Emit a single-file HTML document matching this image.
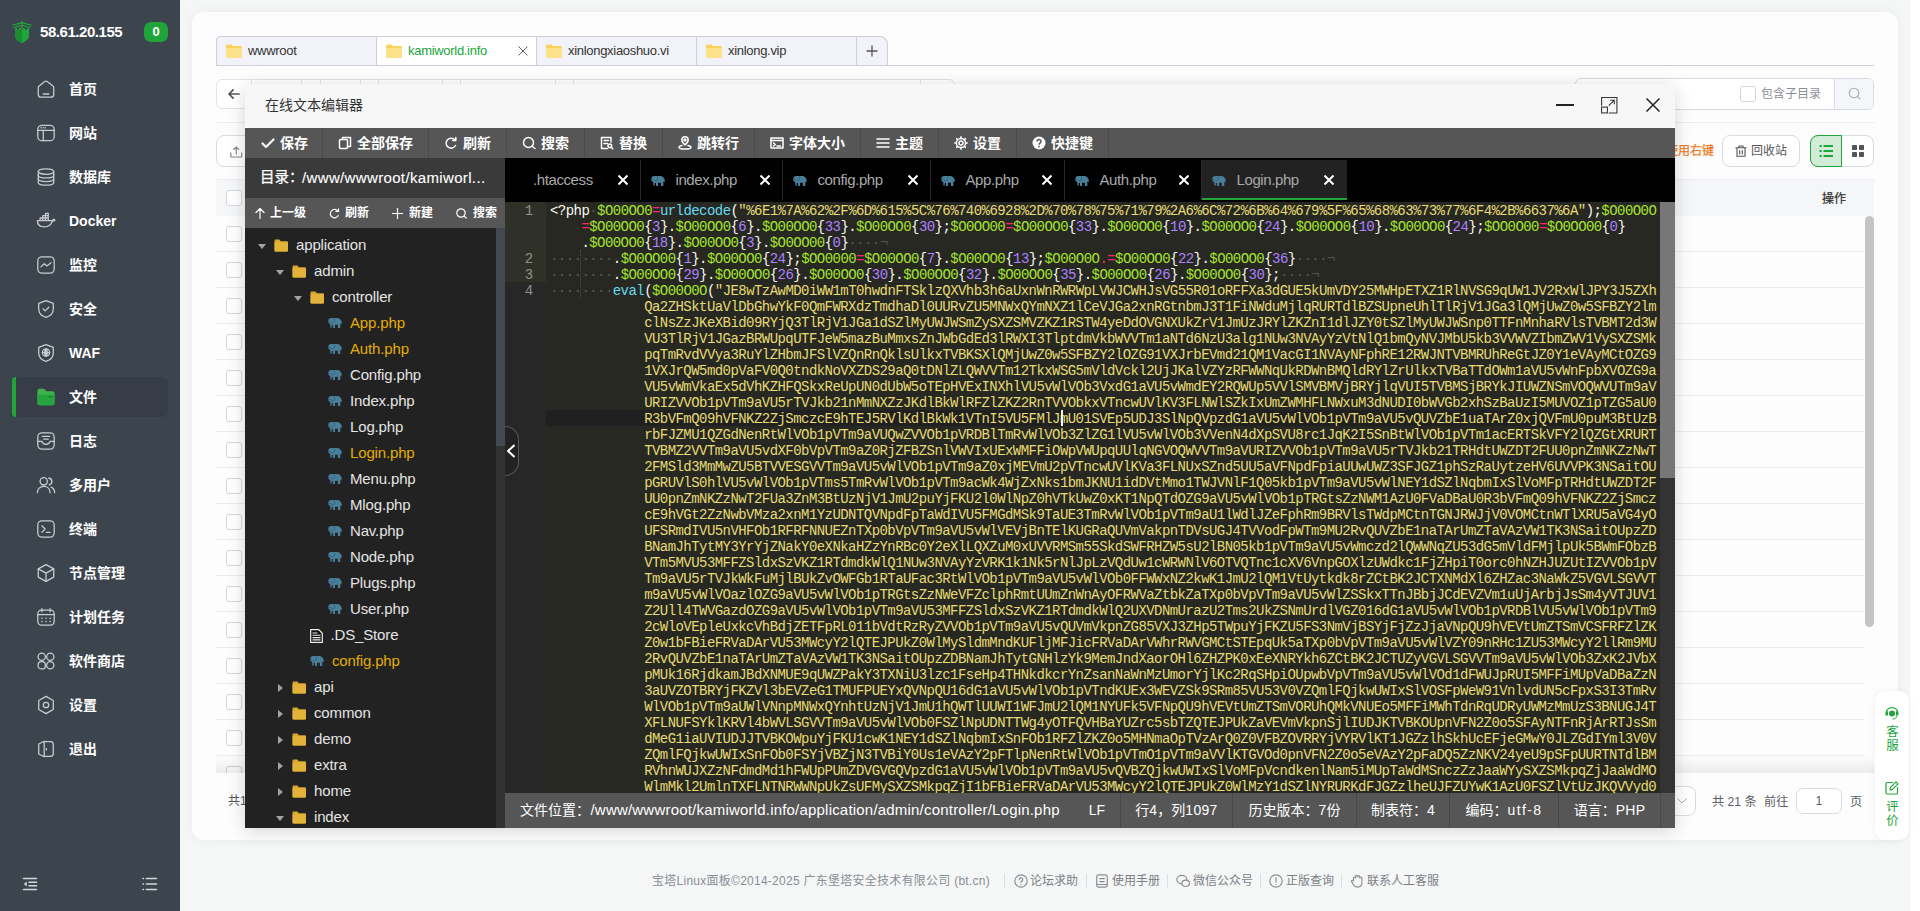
<!DOCTYPE html>
<html lang="zh-CN">
<head>
<meta charset="utf-8">
<title>宝塔Linux面板</title>
<style>
*{box-sizing:border-box;margin:0;padding:0}
html,body{width:1920px;height:911px;overflow:hidden}
body{background:#f5f7f7;font-family:"Liberation Sans","Noto Sans CJK SC",sans-serif;font-size:12px;color:#333;position:relative}
.abs{position:absolute}
svg{display:block}
/* ---------- sidebar ---------- */
#side{position:absolute;left:0;top:0;width:180px;height:911px;background:#3c444e;color:#fff}
#side .ip{position:absolute;left:40px;top:22px;font-size:15px;font-weight:bold;line-height:20px;letter-spacing:-0.45px}
#side .badge{position:absolute;left:144px;top:22px;width:24px;height:20px;border-radius:7px;background:#20a53a;font-size:13px;font-weight:bold;line-height:20px;text-align:center}
#side .logo{position:absolute;left:12px;top:20px}
.mi{position:absolute;left:12px;width:156px;height:44px;border-radius:6px}
.mi .ic{position:absolute;left:23.500px;top:12px;width:20px;height:20px}
.mi .ic svg{width:20px;height:20px}
.mi .tx{position:absolute;left:57px;top:0;line-height:44px;font-size:14px;font-weight:bold;white-space:nowrap}
.mi.on{background:#363d47;height:40px}
.mi.on .ic{top:10px}
.mi.on .tx{line-height:40px}
.mi.on:before{content:"";position:absolute;left:0;top:0;width:4px;height:40px;background:#20a53a;border-radius:6px 0 0 6px}
/* ---------- main card ---------- */
#card{position:absolute;left:192px;top:12px;width:1706px;height:828px;background:#fdfdfd;border-radius:12px;box-shadow:0 0 12px rgba(0,0,0,.05)}
#pgscroll{position:absolute;left:1910px;top:0;width:10px;height:911px;background:#fff}
</style>
</head>
<body>
<div id="side">
<div class="logo"><svg width="20" height="24" viewBox="0 0 20 24"><path d="M10 0.300 l0.800 1.900 l9 2.600 l-0.300 0.900 l-9.500 -2.300 l-9.500 2.300 l-0.300 -0.900 l9 -2.600 Z" fill="#20a53a"/><path d="M1 7 l9 -2.200 l9 2.200 l-0.300 0.900 l-8.700 -2 l-8.700 2 Z" fill="#20a53a"/><rect x="9.400" y="2" width="1.200" height="7" fill="#20a53a"/><path d="M3 8 h2 v1.500 h2 v-1.500 h2 v1.500 h2 v-1.500 h2 v1.500 h2 v-1.500 h2 v8 c0 3 -3.500 5.500 -7 7 c-3.500 -1.500 -7 -4 -7 -7 Z" fill="#20a53a"/><path d="M10 9.500 v13.500 c-3.500 -1.500 -7 -4 -7 -7 v-6.500 Z" fill="#1c8c31"/></svg></div>
<div class="ip">58.61.20.155</div><div class="badge">0</div>
<div class="mi" style="top:67px"><div class="ic"><svg width="22" height="22" viewBox="0 0 22 22" fill="none" stroke="#c9cccf" stroke-width="1.4" stroke-linecap="round" stroke-linejoin="round"><path d="M2.500 9.300 c0 -0.700 0.300 -1.300 0.900 -1.700 l6.200 -4.800 c0.800 -0.600 2 -0.600 2.800 0 l6.200 4.800 c0.600 0.400 0.900 1 0.900 1.700 V17 a3 3 0 0 1 -3 3 H5.500 a3 3 0 0 1 -3 -3 Z"/><path d="M8 16.5 h6"/></svg></div><div class="tx">首页</div></div>
<div class="mi" style="top:111px"><div class="ic"><svg width="22" height="22" viewBox="0 0 22 22" fill="none" stroke="#c9cccf" stroke-width="1.4" stroke-linecap="round" stroke-linejoin="round"><rect x="2" y="2.5" width="18" height="17" rx="4.5"/><path d="M2 8 h18 M8 8 v11.5"/><path d="M5.5 5.3 h0.1 M7.8 5.3 h0.1 M10.1 5.3 h0.1" stroke-width="1.6"/></svg></div><div class="tx">网站</div></div>
<div class="mi" style="top:155px"><div class="ic"><svg width="22" height="22" viewBox="0 0 22 22" fill="none" stroke="#c9cccf" stroke-width="1.4" stroke-linecap="round" stroke-linejoin="round"><ellipse cx="11" cy="5" rx="8.5" ry="3"/><path d="M2.5 5 v12 c0 1.7 3.8 3 8.5 3 s8.5 -1.3 8.5 -3 v-12"/><path d="M2.5 9 c0 1.7 3.8 3 8.5 3 s8.5 -1.3 8.5 -3 M2.5 13 c0 1.7 3.8 3 8.5 3 s8.5 -1.3 8.5 -3"/></svg></div><div class="tx">数据库</div></div>
<div class="mi" style="top:199px"><div class="ic"><svg width="22" height="22" viewBox="0 0 22 22" fill="none" stroke="#c9cccf" stroke-width="1.4" stroke-linecap="round" stroke-linejoin="round"><path d="M1.5 10.5 h15.5 c1 0 2 -0.6 2.3 -1.6 c0.8 0.2 1.5 0.9 1.5 1.6 c-0.8 0.6 -1.8 0.8 -2.8 0.7 c-1.2 3.8 -4.3 6.3 -9 6.3 c-4.5 0 -7.5 -2.6 -7.5 -7 Z"/><path d="M4.5 10.3 v-2.6 h9 v2.6 M7.5 7.7 v-2.6 h6 v2.6 M10.5 5.1 v-2.4 h3 v2.4 M7.5 7.7 v2.6 M10.5 5.1 v5.2"/></svg></div><div class="tx">Docker</div></div>
<div class="mi" style="top:243px"><div class="ic"><svg width="22" height="22" viewBox="0 0 22 22" fill="none" stroke="#c9cccf" stroke-width="1.4" stroke-linecap="round" stroke-linejoin="round"><rect x="2" y="2" width="18" height="18" rx="4.5"/><path d="M5.5 13 l3.5 -3.5 l3 2.5 l4.5 -3.5"/></svg></div><div class="tx">监控</div></div>
<div class="mi" style="top:287px"><div class="ic"><svg width="22" height="22" viewBox="0 0 22 22" fill="none" stroke="#c9cccf" stroke-width="1.4" stroke-linecap="round" stroke-linejoin="round"><path d="M11 1.8 l8 3 v6.2 c0 4.5 -3.2 7.8 -8 9.3 c-4.8 -1.5 -8 -4.8 -8 -9.3 v-6.2 Z"/><path d="M7.8 10.8 l2.3 2.3 l4 -4"/></svg></div><div class="tx">安全</div></div>
<div class="mi" style="top:331px"><div class="ic"><svg width="22" height="22" viewBox="0 0 22 22" fill="none" stroke="#c9cccf" stroke-width="1.4" stroke-linecap="round" stroke-linejoin="round"><path d="M11 1.8 l8 3 v6.2 c0 4.5 -3.2 7.8 -8 9.3 c-4.8 -1.5 -8 -4.8 -8 -9.3 v-6.2 Z"/><circle cx="11" cy="10.5" r="4"/><path d="M7 10.5 h8 M11 6.5 v8 M11 6.5 c-2 1.5 -2 6.5 0 8 M11 6.5 c2 1.5 2 6.5 0 8"/></svg></div><div class="tx">WAF</div></div>
<div class="mi on" style="top:377px"><div class="ic"><svg width="22" height="22" viewBox="0 0 22 22"><path d="M1.5 4.5 a2.5 2.5 0 0 1 2.5 -2.5 h3.8 c0.9 0 1.7 0.4 2.2 1.1 l1.2 1.6 h6.8 a2.5 2.5 0 0 1 2.5 2.5 v10.3 a2.5 2.5 0 0 1 -2.5 2.5 h-14 a2.5 2.5 0 0 1 -2.5 -2.5 Z" fill="#3bb14f"/><path d="M1.5 8.5 h19 v9 a2.5 2.5 0 0 1 -2.5 2.5 h-14 a2.5 2.5 0 0 1 -2.5 -2.5 Z" fill="#27a43d"/><rect x="13.5" y="10" width="4.5" height="1.6" rx="0.8" fill="#1d7f2e"/></svg></div><div class="tx">文件</div></div>
<div class="mi" style="top:419px"><div class="ic"><svg width="22" height="22" viewBox="0 0 22 22" fill="none" stroke="#c9cccf" stroke-width="1.4" stroke-linecap="round" stroke-linejoin="round"><rect x="2" y="2" width="18" height="18" rx="4.5"/><path d="M2 11.5 h4.5 c0.5 2 2.2 3.2 4.5 3.2 s4 -1.2 4.5 -3.2 h4.500"/><path d="M7 6 h8 M8.5 9 h5"/></svg></div><div class="tx">日志</div></div>
<div class="mi" style="top:463px"><div class="ic"><svg width="22" height="22" viewBox="0 0 22 22" fill="none" stroke="#c9cccf" stroke-width="1.4" stroke-linecap="round" stroke-linejoin="round"><circle cx="8.5" cy="7" r="4"/><path d="M1.5 19.5 c0 -4.2 3 -7 7 -7 s7 2.800 7 7"/><path d="M14 3.300 c2 0.300 3.500 1.800 3.500 3.800 s-1.300 3.300 -3 3.700 M16.500 13.300 c2.500 1 4 3.200 4 6.200"/></svg></div><div class="tx">多用户</div></div>
<div class="mi" style="top:507px"><div class="ic"><svg width="22" height="22" viewBox="0 0 22 22" fill="none" stroke="#c9cccf" stroke-width="1.4" stroke-linecap="round" stroke-linejoin="round"><rect x="2" y="2" width="18" height="18" rx="4.500"/><path d="M6.500 7.500 l3.500 3.500 l-3.500 3.500 M11.500 14.800 h4"/></svg></div><div class="tx">终端</div></div>
<div class="mi" style="top:551px"><div class="ic"><svg width="22" height="22" viewBox="0 0 22 22" fill="none" stroke="#c9cccf" stroke-width="1.4" stroke-linecap="round" stroke-linejoin="round"><path d="M11 1.800 l8.500 4.700 v9 l-8.500 4.700 l-8.500 -4.700 v-9 Z"/><path d="M2.500 6.500 l8.500 4.700 l8.500 -4.700 M11 11.200 v9"/></svg></div><div class="tx">节点管理</div></div>
<div class="mi" style="top:595px"><div class="ic"><svg width="22" height="22" viewBox="0 0 22 22" fill="none" stroke="#c9cccf" stroke-width="1.4" stroke-linecap="round" stroke-linejoin="round"><rect x="2" y="3.500" width="18" height="16.500" rx="4"/><path d="M2 8.500 h18 M6.500 1.800 v3.500 M15.500 1.800 v3.500"/><path d="M6.500 12.300 h0.100 M11 12.300 h0.100 M15.500 12.300 h0.100 M6.500 16 h0.100 M11 16 h0.100 M15.500 16 h0.100" stroke-width="1.700"/></svg></div><div class="tx">计划任务</div></div>
<div class="mi" style="top:639px"><div class="ic"><svg width="22" height="22" viewBox="0 0 22 22" fill="none" stroke="#c9cccf" stroke-width="1.4" stroke-linecap="round" stroke-linejoin="round"><circle cx="6.300" cy="6.300" r="4"/><circle cx="15.700" cy="6.300" r="4"/><rect x="2.300" y="11.700" width="8" height="8" rx="3.600"/><circle cx="15.700" cy="15.700" r="4"/></svg></div><div class="tx">软件商店</div></div>
<div class="mi" style="top:683px"><div class="ic"><svg width="22" height="22" viewBox="0 0 22 22" fill="none" stroke="#c9cccf" stroke-width="1.4" stroke-linecap="round" stroke-linejoin="round"><path d="M11 1.500 l8 4.600 v9.800 l-8 4.600 l-8 -4.600 v-9.800 Z"/><circle cx="11" cy="11" r="3"/></svg></div><div class="tx">设置</div></div>
<div class="mi" style="top:727px"><div class="ic"><svg width="22" height="22" viewBox="0 0 22 22" fill="none" stroke="#c9cccf" stroke-width="1.4" stroke-linecap="round" stroke-linejoin="round"><path d="M9 3 h7 a3 3 0 0 1 3 3 v10 a3 3 0 0 1 -3 3 h-7"/><path d="M3 5.500 l6 -3 v17 l-6 -3 Z" /><path d="M11.500 10.500 v1.500"/></svg></div><div class="tx">退出</div></div>
<div class="abs" style="left:22px;top:876px"><svg width="16" height="16" viewBox="0 0 16 16" fill="none" stroke="#d5d7da" stroke-width="1.600" stroke-linecap="round"><path d="M1.500 2.500 h13 M7 6.200 h7.500 M7 9.800 h7.500 M1.500 13.500 h13"/><path d="M4.800 5.500 l-3 2.500 l3 2.500 Z" fill="#d5d7da" stroke="none"/></svg></div>
<div class="abs" style="left:142px;top:876px"><svg width="16" height="16" viewBox="0 0 16 16" fill="none" stroke="#d5d7da" stroke-width="1.600" stroke-linecap="round"><path d="M4.500 2.500 h10 M4.500 8 h10 M4.500 13.500 h10 M1 2.500 h0.500 M1 8 h0.500 M1 13.500 h0.500"/></svg></div>
</div>
<style>
/* ---------- file manager ---------- */
.ftab{position:absolute;top:36px;height:30px;width:160px;background:#f2f3f8;border:1px solid #cdd0da;border-left:none;font-size:13px;line-height:28px;color:#333;white-space:nowrap}
.ftab .fi{position:absolute;left:9px;top:7px}
.ftab .t{position:absolute;left:31px;top:0;letter-spacing:-0.3px}
.ftab.on{background:#fff;border-bottom-color:#fff;color:#20a53a}
.hline{position:absolute;height:1px;background:#ebecf1}
.cb{position:absolute;width:16px;height:16px;border:1px solid #d3d6e0;border-radius:3px;background:#fff}
.btn{position:absolute;border:1px solid #d8dbe4;border-radius:8px;background:#fff}
</style>

<div id="card"></div>
<div id="pgscroll"></div>
<div class="ftab" style="left:216px;width:161px;border-left:1px solid #cdd0da;border-radius:4px 0 0 0;"><div class="fi"><svg width="16" height="14" viewBox="0 0 16 14"><path d="M0 2 a1.500 1.500 0 0 1 1.500 -1.500 h4 l1.500 1.500 h7.500 a1.500 1.500 0 0 1 1.500 1.500 v9 a1.500 1.500 0 0 1 -1.500 1.500 h-13 a1.500 1.500 0 0 1 -1.500 -1.500 Z" fill="#f9d35c"/><path d="M0 4 h16 v8.500 a1.500 1.500 0 0 1 -1.500 1.500 h-13 a1.500 1.500 0 0 1 -1.500 -1.500 Z" fill="#fde28a"/></svg></div><div class="t">wwwroot</div></div>
<div class="ftab on" style="left:377px;"><div class="fi"><svg width="16" height="14" viewBox="0 0 16 14"><path d="M0 2 a1.500 1.500 0 0 1 1.500 -1.500 h4 l1.500 1.500 h7.500 a1.500 1.500 0 0 1 1.500 1.500 v9 a1.500 1.500 0 0 1 -1.500 1.500 h-13 a1.500 1.500 0 0 1 -1.500 -1.500 Z" fill="#f9d35c"/><path d="M0 4 h16 v8.500 a1.500 1.500 0 0 1 -1.500 1.500 h-13 a1.500 1.500 0 0 1 -1.500 -1.500 Z" fill="#fde28a"/></svg></div><div class="t">kamiworld.info</div><svg class="abs" style="left:141px;top:9px" width="10" height="10" viewBox="0 0 10 10" stroke="#666" stroke-width="1" fill="none"><path d="M0.500 0.500 l9 9 M9.500 0.500 l-9 9"/></svg></div>
<div class="ftab" style="left:537px;"><div class="fi"><svg width="16" height="14" viewBox="0 0 16 14"><path d="M0 2 a1.500 1.500 0 0 1 1.500 -1.500 h4 l1.500 1.500 h7.500 a1.500 1.500 0 0 1 1.500 1.500 v9 a1.500 1.500 0 0 1 -1.500 1.500 h-13 a1.500 1.500 0 0 1 -1.500 -1.500 Z" fill="#f9d35c"/><path d="M0 4 h16 v8.500 a1.500 1.500 0 0 1 -1.500 1.500 h-13 a1.500 1.500 0 0 1 -1.500 -1.500 Z" fill="#fde28a"/></svg></div><div class="t">xinlongxiaoshuo.vi</div></div>
<div class="ftab" style="left:697px;"><div class="fi"><svg width="16" height="14" viewBox="0 0 16 14"><path d="M0 2 a1.500 1.500 0 0 1 1.500 -1.500 h4 l1.500 1.500 h7.500 a1.500 1.500 0 0 1 1.500 1.500 v9 a1.500 1.500 0 0 1 -1.500 1.500 h-13 a1.500 1.500 0 0 1 -1.500 -1.500 Z" fill="#f9d35c"/><path d="M0 4 h16 v8.500 a1.500 1.500 0 0 1 -1.500 1.500 h-13 a1.500 1.500 0 0 1 -1.500 -1.500 Z" fill="#fde28a"/></svg></div><div class="t">xinlong.vip</div></div>
<div class="ftab" style="left:857px;width:31px;border-radius:0 8px 0 0"><svg class="abs" style="left:9px;top:8px" width="12" height="12" viewBox="0 0 12 12" stroke="#555" stroke-width="1.300" fill="none"><path d="M6 0.500 v11 M0.500 6 h11"/></svg></div>
<div class="hline" style="left:216px;top:65px;width:1658px;background:#cdd0da"></div>
<div class="btn" style="left:216px;top:79px;width:739px;height:30px;border-radius:6px;border-color:#e2e4ea"></div>
<div class="abs" style="left:251px;top:79px;width:1px;height:7px;background:#e2e4ea"></div>
<div class="abs" style="left:301px;top:79px;width:1px;height:7px;background:#e2e4ea"></div>
<div class="abs" style="left:320px;top:79px;width:1px;height:7px;background:#e2e4ea"></div>
<div class="abs" style="left:360px;top:79px;width:1px;height:7px;background:#e2e4ea"></div>
<div class="abs" style="left:378px;top:79px;width:1px;height:7px;background:#e2e4ea"></div>
<div class="abs" style="left:442px;top:79px;width:1px;height:7px;background:#e2e4ea"></div>
<div class="abs" style="left:460px;top:79px;width:1px;height:7px;background:#e2e4ea"></div>
<div class="abs" style="left:555px;top:79px;width:1px;height:7px;background:#e2e4ea"></div>
<div class="abs" style="left:573px;top:79px;width:1px;height:7px;background:#e2e4ea"></div>
<div class="abs" style="left:920px;top:79px;width:1px;height:7px;background:#e2e4ea"></div>
<svg class="abs" style="left:228px;top:89px" width="12" height="10" viewBox="0 0 13 11" stroke="#555" stroke-width="1.900" fill="none" stroke-linecap="round" stroke-linejoin="round"><path d="M12 5.500 h-11 M5.500 1 l-4.500 4.500 l4.500 4.500"/></svg>
<div class="btn" style="left:1575px;top:78px;width:299px;height:32px;border-radius:6px"></div>
<div class="abs" style="left:1834px;top:79px;width:39px;height:30px;background:#f5f6f9;border-left:1px solid #d8dbe4;border-radius:0 6px 6px 0"></div>
<svg class="abs" style="left:1848px;top:87px" width="13" height="13" viewBox="0 0 13 13" stroke="#aaa" stroke-width="1.100" fill="none" stroke-linecap="round"><circle cx="6" cy="6" r="4.800"/><path d="M9.600 9.600 l2.200 2.200"/></svg>
<div class="cb" style="left:1740px;top:86px"></div>
<div class="abs" style="left:1761px;top:84px;line-height:20px;font-size:12px;color:#8c8f96;white-space:nowrap">包含子目录</div>
<div class="hline" style="left:216px;top:122px;width:1658px"></div>
<div class="btn" style="left:216px;top:135px;width:60px;height:32px"></div>
<svg class="abs" style="left:230px;top:146px" width="12.500" height="12" viewBox="0 0 15 14" stroke="#8a8a8a" stroke-width="1.400" fill="none" stroke-linecap="round" stroke-linejoin="round"><path d="M1 8 v5 h13 v-5 M7.500 9.500 v-8.500 M4.500 4 l3 -3 l3 3"/></svg>
<div class="abs" style="left:1594px;top:141px;width:120px;text-align:right;line-height:20px;font-size:12px;color:#ef7a22;-webkit-text-stroke:0.250px #ef7a22;white-space:nowrap">提示：使用右键</div>
<div class="btn" style="left:1722px;top:135px;width:78px;height:32px"></div>
<svg class="abs" style="left:1735px;top:145px" width="12" height="12" viewBox="0 0 12 12" stroke="#555" stroke-width="1.100" fill="none" stroke-linecap="round"><path d="M0.800 2.800 h10.400 M4 2.800 v-1.800 h4 v1.800 M2 2.800 v8.400 h8 v-8.400 M4.700 5.500 v3.500 M7.300 5.500 v3.500"/></svg>
<div class="abs" style="left:1751px;top:141px;line-height:20px;font-size:12px;color:#555;white-space:nowrap">回收站</div>
<div class="btn" style="left:1810px;top:135px;width:64px;height:32px"></div>
<div class="abs" style="left:1810px;top:135px;width:32px;height:32px;background:#d2edd7;border:1px solid #20a53a;border-radius:8px 0 0 8px"></div>
<svg class="abs" style="left:1819px;top:144px" width="14" height="14" viewBox="0 0 14 14" stroke="#20a53a" stroke-width="1.800" fill="none"><path d="M4.500 2 h9.500 M4.500 7 h9.500 M4.500 12 h9.500 M0.500 2 h2.200 M0.500 7 h2.200 M0.500 12 h2.200"/></svg>
<svg class="abs" style="left:1852px;top:145px" width="12" height="12" viewBox="0 0 12 12" fill="#555"><rect x="0" y="0" width="5" height="5" rx="0.800"/><rect x="7" y="0" width="5" height="5" rx="0.800"/><rect x="0" y="7" width="5" height="5" rx="0.800"/><rect x="7" y="7" width="5" height="5" rx="0.800"/></svg>
<div class="hline" style="left:216px;top:179px;width:1658px"></div>
<div class="abs" style="left:216px;top:180px;width:1658px;height:36px;background:#f5f6f7"></div>
<div class="cb" style="left:226px;top:190px"></div>
<div class="abs" style="left:1822px;top:189px;line-height:20px;font-size:12px;color:#333;-webkit-text-stroke:0.250px #333;white-space:nowrap">操作</div>
<div class="abs" style="left:216px;top:216px;width:1658px;height:557px;overflow:hidden">
<div class="cb" style="left:10px;top:10px"></div><div class="hline" style="left:0;top:35px;width:1648px"></div>
<div class="cb" style="left:10px;top:46px"></div><div class="hline" style="left:0;top:71px;width:1648px"></div>
<div class="cb" style="left:10px;top:82px"></div><div class="hline" style="left:0;top:107px;width:1648px"></div>
<div class="cb" style="left:10px;top:118px"></div><div class="hline" style="left:0;top:143px;width:1648px"></div>
<div class="cb" style="left:10px;top:154px"></div><div class="hline" style="left:0;top:179px;width:1648px"></div>
<div class="cb" style="left:10px;top:190px"></div><div class="hline" style="left:0;top:215px;width:1648px"></div>
<div class="cb" style="left:10px;top:226px"></div><div class="hline" style="left:0;top:251px;width:1648px"></div>
<div class="cb" style="left:10px;top:262px"></div><div class="hline" style="left:0;top:287px;width:1648px"></div>
<div class="cb" style="left:10px;top:298px"></div><div class="hline" style="left:0;top:323px;width:1648px"></div>
<div class="cb" style="left:10px;top:334px"></div><div class="hline" style="left:0;top:359px;width:1648px"></div>
<div class="cb" style="left:10px;top:370px"></div><div class="hline" style="left:0;top:395px;width:1648px"></div>
<div class="cb" style="left:10px;top:406px"></div><div class="hline" style="left:0;top:431px;width:1648px"></div>
<div class="cb" style="left:10px;top:442px"></div><div class="hline" style="left:0;top:467px;width:1648px"></div>
<div class="cb" style="left:10px;top:478px"></div><div class="hline" style="left:0;top:503px;width:1648px"></div>
<div class="cb" style="left:10px;top:514px"></div><div class="hline" style="left:0;top:539px;width:1648px"></div>
<div class="cb" style="left:10px;top:550px"></div><div class="hline" style="left:0;top:575px;width:1648px"></div>
<div class="abs" style="left:0;top:540px;width:1658px;height:17px;background:linear-gradient(rgba(0,0,0,0),rgba(0,0,0,.07))"></div>
</div>
<div class="abs" style="left:1865px;top:216px;width:9px;height:411px;border-radius:5px;background:#c4c4c4"></div>
<div class="abs" style="left:228px;top:791px;line-height:20px;font-size:12px;color:#555;white-space:nowrap">共16个目录，5个文件，文件大小：</div>
<div class="btn" style="left:1600px;top:786px;width:96px;height:30px;border-radius:8px"></div>
<svg class="abs" style="left:1677px;top:798px" width="10" height="6" viewBox="0 0 10 6" stroke="#aaa" stroke-width="1" fill="none"><path d="M0.500 0.500 l4.500 4.500 l4.500 -4.500"/></svg>
<div class="abs" style="left:1712px;top:792px;line-height:20px;font-size:12.200px;color:#5a5e66;white-space:nowrap">共 21 条</div>
<div class="abs" style="left:1764px;top:792px;line-height:20px;font-size:12.200px;color:#5a5e66;white-space:nowrap">前往</div>
<div class="btn" style="left:1796px;top:788px;width:46px;height:26px;border-radius:7px;text-align:center;line-height:25px;font-size:12.200px;color:#5a5e66">1</div>
<div class="abs" style="left:1850px;top:792px;line-height:20px;font-size:12.200px;color:#5a5e66;white-space:nowrap">页</div>
<div class="abs" style="left:1875px;top:691px;width:34px;height:149px;background:#fff;border-radius:10px;box-shadow:0 0 6px rgba(0,0,0,.06)"></div>
<svg class="abs" style="left:1885px;top:707px" width="14" height="13" viewBox="0 0 14 13"><path d="M7 0 a6.500 6 0 0 1 6.500 6 v2.500 h-2.500 v-4 h0.800 a5 4.500 0 0 0 -9.600 0 h0.800 v4 h-2.500 v-2.500 a6.500 6 0 0 1 6.500 -6 Z" fill="#20a53a"/><circle cx="7" cy="6.500" r="3" fill="#20a53a"/><path d="M11.500 9 c0 2 -1.500 3 -4 3" stroke="#20a53a" stroke-width="1" fill="none"/></svg>
<div class="abs" style="left:1886px;top:725px;width:13px;line-height:14px;font-size:12.500px;color:#20a53a;text-align:center">客服</div>
<svg class="abs" style="left:1885px;top:781px" width="14" height="14" viewBox="0 0 14 14" stroke="#20a53a" stroke-width="1.200" fill="none" stroke-linecap="round" stroke-linejoin="round"><path d="M7.500 1.500 h-5 a1.500 1.500 0 0 0 -1.500 1.500 v8.500 a1.500 1.500 0 0 0 1.500 1.500 h8.500 a1.500 1.500 0 0 0 1.500 -1.500 v-5"/><path d="M11 0.800 l2 2 l-5.500 5.500 l-2.500 0.500 l0.500 -2.500 Z"/></svg>
<div class="abs" style="left:1886px;top:800px;width:13px;line-height:14px;font-size:12.500px;color:#20a53a;text-align:center">评价</div>
<div class="abs" style="left:652px;top:871px;line-height:20px;font-size:12px;color:#8a8d94;white-space:nowrap;letter-spacing:0.260px">宝塔Linux面板©2014-2025 广东堡塔安全技术有限公司 (bt.cn)</div>
<div class="abs" style="left:1004px;top:874px;width:1px;height:14px;background:#dcdfe6"></div>
<svg class="abs" style="left:1014px;top:874px" width="14" height="14" viewBox="0 0 12 12" stroke="#8a8d94" stroke-width="1" fill="none" stroke-linecap="round" stroke-linejoin="round"><circle cx="6" cy="6" r="5.300"/><path d="M4.500 4.800 a1.500 1.500 0 1 1 2.200 1.300 c-0.500 0.300 -0.700 0.600 -0.700 1.200 M6 9 v0.200"/></svg>
<div class="abs" style="left:1030px;top:871px;line-height:20px;font-size:12px;color:#7b7e85;white-space:nowrap">论坛求助</div>
<div class="abs" style="left:1086px;top:874px;width:1px;height:14px;background:#dcdfe6"></div>
<svg class="abs" style="left:1095px;top:874px" width="14" height="14" viewBox="0 0 12 12" stroke="#8a8d94" stroke-width="1" fill="none" stroke-linecap="round" stroke-linejoin="round"><rect x="1.500" y="0.800" width="9" height="10.400" rx="1.500"/><path d="M4 4 h4 M4 6.500 h4 M1.500 9 h9"/></svg>
<div class="abs" style="left:1112px;top:871px;line-height:20px;font-size:12px;color:#7b7e85;white-space:nowrap">使用手册</div>
<div class="abs" style="left:1167px;top:874px;width:1px;height:14px;background:#dcdfe6"></div>
<svg class="abs" style="left:1176px;top:874px" width="14" height="14" viewBox="0 0 12 12" stroke="#8a8d94" stroke-width="1" fill="none" stroke-linecap="round" stroke-linejoin="round"><ellipse cx="5" cy="4.800" rx="4.300" ry="3.600"/><ellipse cx="8.300" cy="8" rx="3.200" ry="2.700" fill="#f5f7f7"/></svg>
<div class="abs" style="left:1193px;top:871px;line-height:20px;font-size:12px;color:#7b7e85;white-space:nowrap">微信公众号</div>
<div class="abs" style="left:1260px;top:874px;width:1px;height:14px;background:#dcdfe6"></div>
<svg class="abs" style="left:1269px;top:874px" width="14" height="14" viewBox="0 0 12 12" stroke="#8a8d94" stroke-width="1" fill="none" stroke-linecap="round" stroke-linejoin="round"><circle cx="6" cy="6" r="5.300"/><path d="M6 3 v3.800 M6 8.800 v0.200"/></svg>
<div class="abs" style="left:1286px;top:871px;line-height:20px;font-size:12px;color:#7b7e85;white-space:nowrap">正版查询</div>
<div class="abs" style="left:1341px;top:874px;width:1px;height:14px;background:#dcdfe6"></div>
<svg class="abs" style="left:1350px;top:874px" width="14" height="14" viewBox="0 0 12 12" stroke="#8a8d94" stroke-width="1" fill="none" stroke-linecap="round" stroke-linejoin="round"><path d="M3 6 v-2.500 a0.900 0.900 0 0 1 1.800 0 v-1.500 a0.900 0.900 0 0 1 1.800 0 v0.500 a0.900 0.900 0 0 1 1.800 0 v1 a0.900 0.900 0 0 1 1.800 0 v4 c0 2.200 -1.500 3.700 -3.800 3.700 c-1.800 0 -2.800 -0.800 -3.600 -2.200 l-1.500 -2.600 c-0.400 -0.800 0.700 -1.400 1.300 -0.700 Z"/></svg>
<div class="abs" style="left:1367px;top:871px;line-height:20px;font-size:12px;color:#7b7e85;white-space:nowrap">联系人工客服</div>
<style>
/* ---------- editor modal ---------- */
#modal{position:absolute;left:245px;top:84px;width:1430px;height:744px;background:transparent;border-radius:8px 8px 0 0;box-shadow:0 3px 18px rgba(0,0,0,.16)}
#mhead{position:absolute;left:0;top:0;width:1430px;height:44px;background:#f7f7f7;border-radius:8px}
#mhead .t{position:absolute;left:20px;top:0;line-height:43px;font-size:14px;color:#333}
#tbar{position:absolute;left:0;top:44px;width:1430px;height:30px;background:#565656}
#tbar .b{position:absolute;top:0;height:30px;border-right:1px solid #4a4a4a;color:#fff;font-size:14px;font-weight:bold;line-height:30px;white-space:nowrap}
#tbar .b svg{position:absolute;top:8px}
#tbar .b span{position:absolute;top:0}
#dir{position:absolute;left:0;top:74px;width:260px;height:40px;background:#3a3a3a;color:#fff;font-size:15px;line-height:39px;white-space:nowrap}
#tt{position:absolute;left:0;top:114px;width:260px;height:30px;background:#565656;color:#fff;font-size:12px;font-weight:bold;line-height:30px;white-space:nowrap}
#tt span{position:absolute;top:0}
#tt svg{position:absolute;top:10px}
#tree{position:absolute;left:0;top:144px;width:260px;height:600px;background:#222;overflow:hidden}
.tr{position:absolute;left:0;height:26px;line-height:26px;font-size:15px;color:#e4e4e4;white-space:nowrap;letter-spacing:-0.150px}
.tr.y{color:#e2ae04}
.tr svg{position:absolute}
.tr span{position:absolute;top:0}
#etabs{position:absolute;left:260px;top:74px;width:1170px;height:44px;background:#000}
.et{position:absolute;top:2px;height:40px;border-right:1px solid #2a2a2a;color:#a9a9a9;font-size:15px;line-height:40px;white-space:nowrap;letter-spacing:-0.400px}
.et.on{background:#222;border-bottom:2px solid #20a53a;border-right:none}
.et span{position:absolute;top:0}
.et svg{position:absolute}
#gut{position:absolute;left:260px;top:118px;width:41px;height:592px;background:#2f3129}
#code{position:absolute;left:301px;top:118px;width:1114px;height:592px;background:#272822;overflow:hidden}
.ln{position:absolute;right:13.500px;height:16px;line-height:16px;font-family:"Liberation Mono",monospace;font-size:14px;letter-spacing:-0.556px;color:#8f908a}
.cl{position:absolute;height:16px;line-height:16px;font-family:"Liberation Mono",monospace;font-size:14px;letter-spacing:-0.556px;white-space:pre;color:#f8f8f2}
.v{color:#a6e22e}.k{color:#f92672}.f{color:#66d9ef}.s{color:#e6db74}.n{color:#ae81ff}.i{color:#55564f}
#vsb{position:absolute;left:1415px;top:118px;width:15px;height:592px;background:#333}
#sbar{position:absolute;left:260px;top:709px;width:1170px;height:35px;background:#565656;color:#fff;font-size:14px;line-height:34px;white-space:nowrap}
#sbar .g{position:absolute;top:0;height:35px;border-left:1px solid #474747;text-align:center}
</style>

<div id="modal">
<div id="mhead"><div class="t">在线文本编辑器</div>
<svg class="abs" style="left:1311px;top:20px" width="18" height="3" viewBox="0 0 18 3"><rect width="18" height="2" y="0" fill="#222"/></svg>
<svg class="abs" style="left:1356px;top:13px" width="16.500" height="16.500" viewBox="0 0 17 17" stroke="#333" stroke-width="1.100" fill="none"><path d="M0.600 9 v-8.400 h15.800 v15.800 h-8.400"/><rect x="0.600" y="10.400" width="6" height="6"/><path d="M8 9 l5.500 -5.500 M9.500 3.300 h4.200 v4.200"/></svg>
<svg class="abs" style="left:1401px;top:14px" width="14" height="14" viewBox="0 0 14 14" stroke="#222" stroke-width="1.500" fill="none"><path d="M0.500 0.500 l13 13 M13.500 0.500 l-13 13"/></svg>
</div>
<div id="tbar">
<div class="b" style="left:1px;width:77px"><div class="abs" style="left:15px;top:0"><svg width="14" height="14" viewBox="0 0 14 14" stroke="#fff" stroke-width="2.200" fill="none" stroke-linecap="round" stroke-linejoin="round"><path d="M1.500 7.500 l3.500 3.500 l7.500 -7.500"/></svg></div><span style="left:34px">保存</span></div>
<div class="b" style="left:78px;width:106px"><div class="abs" style="left:15px;top:0"><svg width="14" height="14" viewBox="0 0 14 14" stroke="#fff" stroke-width="1.500" fill="none" stroke-linecap="round" stroke-linejoin="round" stroke-width="1.200"><rect x="1.500" y="3.500" width="8" height="9" rx="1"/><path d="M4.500 3.500 v-2 h8 v9 h-3"/></svg></div><span style="left:34px">全部保存</span></div>
<div class="b" style="left:184px;width:78px"><div class="abs" style="left:15px;top:0"><svg width="14" height="14" viewBox="0 0 14 14" stroke="#fff" stroke-width="1.500" fill="none" stroke-linecap="round" stroke-linejoin="round"><path d="M11.500 9.500 a5 5 0 1 1 -0.500 -5.500"/><path d="M11.800 1.500 v3 h-3" /></svg></div><span style="left:34px">刷新</span></div>
<div class="b" style="left:262px;width:78px"><div class="abs" style="left:15px;top:0"><svg width="14" height="14" viewBox="0 0 14 14" stroke="#fff" stroke-width="1.500" fill="none" stroke-linecap="round" stroke-linejoin="round"><circle cx="6.500" cy="6.500" r="5"/><path d="M10.500 10.500 l2.500 2"/></svg></div><span style="left:34px">搜索</span></div>
<div class="b" style="left:340px;width:78px"><div class="abs" style="left:15px;top:0"><svg width="14" height="14" viewBox="0 0 14 14" stroke="#fff" stroke-width="1.500" fill="none" stroke-linecap="round" stroke-linejoin="round" stroke-width="1.200"><path d="M11 6 v-4.500 h-9.500 v11 h6 M4 4.500 h4.500 M4 7.500 h3.500"/><circle cx="9.800" cy="9.800" r="1.800"/><path d="M11.200 11.200 l1.600 1.600"/></svg></div><span style="left:34px">替换</span></div>
<div class="b" style="left:418px;width:92px"><div class="abs" style="left:15px;top:0"><svg width="14" height="14" viewBox="0 0 14 14" stroke="#fff" stroke-width="1.500" fill="none" stroke-linecap="round" stroke-linejoin="round" stroke-width="1.200"><path d="M7 9 c-2.500 -2.500 -3.200 -3.800 -3.200 -5 a3.200 3.200 0 0 1 6.400 0 c0 1.200 -0.700 2.500 -3.200 5 Z"/><circle cx="7" cy="4" r="1"/><path d="M4 9.500 c-1.800 0.400 -3 1 -3 1.700 c0 1 2.700 1.800 6 1.800 s6 -0.800 6 -1.800 c0 -0.700 -1.200 -1.300 -3 -1.700"/></svg></div><span style="left:34px">跳转行</span></div>
<div class="b" style="left:510px;width:106px"><div class="abs" style="left:15px;top:0"><svg width="14" height="14" viewBox="0 0 14 14" stroke="#fff" stroke-width="1.500" fill="none" stroke-linecap="round" stroke-linejoin="round" stroke-width="1.200"><rect x="1" y="2" width="12" height="10"/><path d="M1 4.500 h12 M3.500 7 l1.800 1.500 l-1.800 1.500 M7 10 h3.500"/></svg></div><span style="left:34px">字体大小</span></div>
<div class="b" style="left:616px;width:78px"><div class="abs" style="left:15px;top:0"><svg width="14" height="14" viewBox="0 0 14 14" stroke="#fff" stroke-width="1.500" fill="none" stroke-linecap="round" stroke-linejoin="round"><path d="M1 3 h12 M1 7 h12 M1 11 h12"/></svg></div><span style="left:34px">主题</span></div>
<div class="b" style="left:694px;width:78px"><div class="abs" style="left:15px;top:0"><svg width="14" height="14" viewBox="0 0 14 14" stroke="#fff" stroke-width="1.500" fill="none" stroke-linecap="round" stroke-linejoin="round" stroke-width="1.200"><circle cx="7" cy="7" r="2"/><circle cx="7" cy="7" r="4.600"/><path d="M7 0.800 v1.600 M7 11.600 v1.600 M0.800 7 h1.600 M11.600 7 h1.600 M2.600 2.600 l1.100 1.100 M10.300 10.300 l1.100 1.100 M2.600 11.400 l1.100 -1.100 M10.300 3.700 l1.100 -1.100"/></svg></div><span style="left:34px">设置</span></div>
<div class="b" style="left:772px;width:92px"><div class="abs" style="left:15px;top:0"><svg width="14" height="14" viewBox="0 0 14 14"><circle cx="7" cy="7" r="6.500" fill="#fff"/><path d="M5 5.500 a2 2 0 1 1 3 1.700 c-0.700 0.400 -1 0.800 -1 1.500" stroke="#565656" stroke-width="1.500" fill="none"/><circle cx="7" cy="10.600" r="0.900" fill="#565656"/></svg></div><span style="left:34px">快捷键</span></div>
</div>
<div id="dir"><span class="abs" style="left:15px;top:0;font-size:14.500px;-webkit-text-stroke:0.250px #fff">目录：</span><span class="abs" style="left:57px;top:0;letter-spacing:0.350px;-webkit-text-stroke:0.120px #fff">/www/wwwroot/kamiworl...</span></div>
<div id="tt">
<svg style="left:10px" width="10" height="11" viewBox="0 0 10 11" stroke="#fff" stroke-width="1.200" fill="none" stroke-linecap="round" stroke-linejoin="round"><path d="M5 10.500 v-9.500 M1 4.500 l4 -4 l4 4"/></svg><span style="left:25px">上一级</span>
<svg style="left:84px" width="11" height="11" viewBox="0 0 11 11" stroke="#fff" stroke-width="1.200" fill="none" stroke-linecap="round" stroke-linejoin="round"><path d="M9.300 7.500 a4.200 4.200 0 1 1 -0.500 -4.500"/><path d="M9.500 0.800 v2.700 h-2.700"/></svg><span style="left:100px">刷新</span>
<svg style="left:147px" width="11" height="11" viewBox="0 0 11 11" stroke="#fff" stroke-width="1.200" fill="none" stroke-linecap="round" stroke-linejoin="round"><path d="M5.500 0.500 v10 M0.500 5.500 h10"/></svg><span style="left:164px">新建</span>
<svg style="left:211px" width="11" height="11" viewBox="0 0 11 11" stroke="#fff" stroke-width="1.200" fill="none" stroke-linecap="round" stroke-linejoin="round"><circle cx="5" cy="5" r="4.200"/><path d="M8.300 8.300 l2 1.800"/></svg><span style="left:228px">搜索</span>
</div>
<div id="tree">
<div class="tr" style="top:4px"><svg style="left:12.5px;top:12px" width="8" height="5" viewBox="0 0 8 5"><path d="M0 0 h8 l-4 5 Z" fill="#a4a4a4"/></svg><svg style="left:29px;top:7px" width="14.500" height="12.500" viewBox="0 0 15 14"><path d="M0 1.500 a1 1 0 0 1 1 -1 h4.500 l1.500 2 h7 a1 1 0 0 1 1 1 v9.500 a1 1 0 0 1 -1 1 h-13 a1 1 0 0 1 -1 -1 Z" fill="#d9a62e"/><path d="M0 3.500 h15 v9.500 a1 1 0 0 1 -1 1 h-13 a1 1 0 0 1 -1 -1 Z" fill="#e2b23a"/></svg><span style="left:51px">application</span></div>
<div class="tr" style="top:30px"><svg style="left:30.5px;top:12px" width="8" height="5" viewBox="0 0 8 5"><path d="M0 0 h8 l-4 5 Z" fill="#a4a4a4"/></svg><svg style="left:47px;top:7px" width="14.500" height="12.500" viewBox="0 0 15 14"><path d="M0 1.500 a1 1 0 0 1 1 -1 h4.500 l1.500 2 h7 a1 1 0 0 1 1 1 v9.500 a1 1 0 0 1 -1 1 h-13 a1 1 0 0 1 -1 -1 Z" fill="#d9a62e"/><path d="M0 3.500 h15 v9.500 a1 1 0 0 1 -1 1 h-13 a1 1 0 0 1 -1 -1 Z" fill="#e2b23a"/></svg><span style="left:69px">admin</span></div>
<div class="tr" style="top:56px"><svg style="left:48.5px;top:12px" width="8" height="5" viewBox="0 0 8 5"><path d="M0 0 h8 l-4 5 Z" fill="#a4a4a4"/></svg><svg style="left:65px;top:7px" width="14.500" height="12.500" viewBox="0 0 15 14"><path d="M0 1.500 a1 1 0 0 1 1 -1 h4.500 l1.500 2 h7 a1 1 0 0 1 1 1 v9.500 a1 1 0 0 1 -1 1 h-13 a1 1 0 0 1 -1 -1 Z" fill="#d9a62e"/><path d="M0 3.500 h15 v9.500 a1 1 0 0 1 -1 1 h-13 a1 1 0 0 1 -1 -1 Z" fill="#e2b23a"/></svg><span style="left:87px">controller</span></div>
<div class="tr y" style="top:82px"><svg style="left:83px;top:8px" width="14" height="10" viewBox="0 0 14 10"><path d="M0.300 3 a3 3 0 0 1 3 -3 h5.700 a4.800 4.800 0 0 1 4.800 4.800 c0 0.800 -0.300 1.300 -0.800 1.500 l-0.700 -1 v4.700 h-2.400 v-3.200 h-2.900 v3.200 h-2 v-3 h-1.200 v2.600 h-1.500 v-3.300 c-1.200 -0.300 -2 -1.300 -2 -2.500 Z" fill="#4a7f9a"/><path d="M6.400 0.400 c0.500 1.500 0.300 3 -0.800 4 c-0.800 0.600 -1.800 0.500 -2.600 0.200" stroke="#2c566c" stroke-width="0.700" fill="none"/><circle cx="1.700" cy="3.200" r="0.500" fill="#23465a"/><circle cx="1.600" cy="5.200" r="0.450" fill="#23465a"/></svg><span style="left:105px">App.php</span></div>
<div class="tr y" style="top:108px"><svg style="left:83px;top:8px" width="14" height="10" viewBox="0 0 14 10"><path d="M0.300 3 a3 3 0 0 1 3 -3 h5.700 a4.800 4.800 0 0 1 4.800 4.800 c0 0.800 -0.300 1.300 -0.800 1.500 l-0.700 -1 v4.700 h-2.400 v-3.200 h-2.900 v3.200 h-2 v-3 h-1.200 v2.600 h-1.500 v-3.300 c-1.200 -0.300 -2 -1.300 -2 -2.500 Z" fill="#4a7f9a"/><path d="M6.400 0.400 c0.500 1.500 0.300 3 -0.800 4 c-0.800 0.600 -1.800 0.500 -2.600 0.200" stroke="#2c566c" stroke-width="0.700" fill="none"/><circle cx="1.700" cy="3.200" r="0.500" fill="#23465a"/><circle cx="1.600" cy="5.200" r="0.450" fill="#23465a"/></svg><span style="left:105px">Auth.php</span></div>
<div class="tr" style="top:134px"><svg style="left:83px;top:8px" width="14" height="10" viewBox="0 0 14 10"><path d="M0.300 3 a3 3 0 0 1 3 -3 h5.700 a4.800 4.800 0 0 1 4.800 4.800 c0 0.800 -0.300 1.300 -0.800 1.500 l-0.700 -1 v4.700 h-2.400 v-3.200 h-2.900 v3.200 h-2 v-3 h-1.200 v2.600 h-1.500 v-3.300 c-1.200 -0.300 -2 -1.300 -2 -2.500 Z" fill="#4a7f9a"/><path d="M6.400 0.400 c0.500 1.500 0.300 3 -0.800 4 c-0.800 0.600 -1.800 0.500 -2.600 0.200" stroke="#2c566c" stroke-width="0.700" fill="none"/><circle cx="1.700" cy="3.200" r="0.500" fill="#23465a"/><circle cx="1.600" cy="5.200" r="0.450" fill="#23465a"/></svg><span style="left:105px">Config.php</span></div>
<div class="tr" style="top:160px"><svg style="left:83px;top:8px" width="14" height="10" viewBox="0 0 14 10"><path d="M0.300 3 a3 3 0 0 1 3 -3 h5.700 a4.800 4.800 0 0 1 4.800 4.800 c0 0.800 -0.300 1.300 -0.800 1.500 l-0.700 -1 v4.700 h-2.400 v-3.200 h-2.900 v3.200 h-2 v-3 h-1.200 v2.600 h-1.500 v-3.300 c-1.200 -0.300 -2 -1.300 -2 -2.500 Z" fill="#4a7f9a"/><path d="M6.400 0.400 c0.500 1.500 0.300 3 -0.800 4 c-0.800 0.600 -1.800 0.500 -2.600 0.200" stroke="#2c566c" stroke-width="0.700" fill="none"/><circle cx="1.700" cy="3.200" r="0.500" fill="#23465a"/><circle cx="1.600" cy="5.200" r="0.450" fill="#23465a"/></svg><span style="left:105px">Index.php</span></div>
<div class="tr" style="top:186px"><svg style="left:83px;top:8px" width="14" height="10" viewBox="0 0 14 10"><path d="M0.300 3 a3 3 0 0 1 3 -3 h5.700 a4.800 4.800 0 0 1 4.800 4.800 c0 0.800 -0.300 1.300 -0.800 1.500 l-0.700 -1 v4.700 h-2.400 v-3.200 h-2.900 v3.200 h-2 v-3 h-1.200 v2.600 h-1.500 v-3.300 c-1.200 -0.300 -2 -1.300 -2 -2.500 Z" fill="#4a7f9a"/><path d="M6.400 0.400 c0.500 1.500 0.300 3 -0.800 4 c-0.800 0.600 -1.800 0.500 -2.600 0.200" stroke="#2c566c" stroke-width="0.700" fill="none"/><circle cx="1.700" cy="3.200" r="0.500" fill="#23465a"/><circle cx="1.600" cy="5.200" r="0.450" fill="#23465a"/></svg><span style="left:105px">Log.php</span></div>
<div class="tr y" style="top:212px"><svg style="left:83px;top:8px" width="14" height="10" viewBox="0 0 14 10"><path d="M0.300 3 a3 3 0 0 1 3 -3 h5.700 a4.800 4.800 0 0 1 4.800 4.800 c0 0.800 -0.300 1.300 -0.800 1.500 l-0.700 -1 v4.700 h-2.400 v-3.200 h-2.900 v3.200 h-2 v-3 h-1.200 v2.600 h-1.500 v-3.300 c-1.200 -0.300 -2 -1.300 -2 -2.500 Z" fill="#4a7f9a"/><path d="M6.400 0.400 c0.500 1.500 0.300 3 -0.800 4 c-0.800 0.600 -1.800 0.500 -2.600 0.200" stroke="#2c566c" stroke-width="0.700" fill="none"/><circle cx="1.700" cy="3.200" r="0.500" fill="#23465a"/><circle cx="1.600" cy="5.200" r="0.450" fill="#23465a"/></svg><span style="left:105px">Login.php</span></div>
<div class="tr" style="top:238px"><svg style="left:83px;top:8px" width="14" height="10" viewBox="0 0 14 10"><path d="M0.300 3 a3 3 0 0 1 3 -3 h5.700 a4.800 4.800 0 0 1 4.800 4.800 c0 0.800 -0.300 1.300 -0.800 1.500 l-0.700 -1 v4.700 h-2.400 v-3.200 h-2.900 v3.200 h-2 v-3 h-1.200 v2.600 h-1.500 v-3.300 c-1.200 -0.300 -2 -1.300 -2 -2.500 Z" fill="#4a7f9a"/><path d="M6.400 0.400 c0.500 1.500 0.300 3 -0.800 4 c-0.800 0.600 -1.800 0.500 -2.600 0.200" stroke="#2c566c" stroke-width="0.700" fill="none"/><circle cx="1.700" cy="3.200" r="0.500" fill="#23465a"/><circle cx="1.600" cy="5.200" r="0.450" fill="#23465a"/></svg><span style="left:105px">Menu.php</span></div>
<div class="tr" style="top:264px"><svg style="left:83px;top:8px" width="14" height="10" viewBox="0 0 14 10"><path d="M0.300 3 a3 3 0 0 1 3 -3 h5.700 a4.800 4.800 0 0 1 4.800 4.800 c0 0.800 -0.300 1.300 -0.800 1.500 l-0.700 -1 v4.700 h-2.400 v-3.200 h-2.900 v3.200 h-2 v-3 h-1.200 v2.600 h-1.500 v-3.300 c-1.200 -0.300 -2 -1.300 -2 -2.500 Z" fill="#4a7f9a"/><path d="M6.400 0.400 c0.500 1.500 0.300 3 -0.800 4 c-0.800 0.600 -1.800 0.500 -2.600 0.200" stroke="#2c566c" stroke-width="0.700" fill="none"/><circle cx="1.700" cy="3.200" r="0.500" fill="#23465a"/><circle cx="1.600" cy="5.200" r="0.450" fill="#23465a"/></svg><span style="left:105px">Mlog.php</span></div>
<div class="tr" style="top:290px"><svg style="left:83px;top:8px" width="14" height="10" viewBox="0 0 14 10"><path d="M0.300 3 a3 3 0 0 1 3 -3 h5.700 a4.800 4.800 0 0 1 4.800 4.800 c0 0.800 -0.300 1.300 -0.800 1.500 l-0.700 -1 v4.700 h-2.400 v-3.200 h-2.900 v3.200 h-2 v-3 h-1.200 v2.600 h-1.500 v-3.300 c-1.200 -0.300 -2 -1.300 -2 -2.500 Z" fill="#4a7f9a"/><path d="M6.400 0.400 c0.500 1.500 0.300 3 -0.800 4 c-0.800 0.600 -1.800 0.500 -2.600 0.200" stroke="#2c566c" stroke-width="0.700" fill="none"/><circle cx="1.700" cy="3.200" r="0.500" fill="#23465a"/><circle cx="1.600" cy="5.200" r="0.450" fill="#23465a"/></svg><span style="left:105px">Nav.php</span></div>
<div class="tr" style="top:316px"><svg style="left:83px;top:8px" width="14" height="10" viewBox="0 0 14 10"><path d="M0.300 3 a3 3 0 0 1 3 -3 h5.700 a4.800 4.800 0 0 1 4.800 4.800 c0 0.800 -0.300 1.300 -0.800 1.500 l-0.700 -1 v4.700 h-2.400 v-3.200 h-2.900 v3.200 h-2 v-3 h-1.200 v2.600 h-1.500 v-3.300 c-1.200 -0.300 -2 -1.300 -2 -2.500 Z" fill="#4a7f9a"/><path d="M6.400 0.400 c0.500 1.500 0.300 3 -0.800 4 c-0.800 0.600 -1.800 0.500 -2.600 0.200" stroke="#2c566c" stroke-width="0.700" fill="none"/><circle cx="1.700" cy="3.200" r="0.500" fill="#23465a"/><circle cx="1.600" cy="5.200" r="0.450" fill="#23465a"/></svg><span style="left:105px">Node.php</span></div>
<div class="tr" style="top:342px"><svg style="left:83px;top:8px" width="14" height="10" viewBox="0 0 14 10"><path d="M0.300 3 a3 3 0 0 1 3 -3 h5.700 a4.800 4.800 0 0 1 4.800 4.800 c0 0.800 -0.300 1.300 -0.800 1.500 l-0.700 -1 v4.700 h-2.400 v-3.200 h-2.900 v3.200 h-2 v-3 h-1.200 v2.600 h-1.500 v-3.300 c-1.200 -0.300 -2 -1.300 -2 -2.500 Z" fill="#4a7f9a"/><path d="M6.400 0.400 c0.500 1.500 0.300 3 -0.800 4 c-0.800 0.600 -1.800 0.500 -2.600 0.200" stroke="#2c566c" stroke-width="0.700" fill="none"/><circle cx="1.700" cy="3.200" r="0.500" fill="#23465a"/><circle cx="1.600" cy="5.200" r="0.450" fill="#23465a"/></svg><span style="left:105px">Plugs.php</span></div>
<div class="tr" style="top:368px"><svg style="left:83px;top:8px" width="14" height="10" viewBox="0 0 14 10"><path d="M0.300 3 a3 3 0 0 1 3 -3 h5.700 a4.800 4.800 0 0 1 4.800 4.800 c0 0.800 -0.300 1.300 -0.800 1.500 l-0.700 -1 v4.700 h-2.400 v-3.200 h-2.900 v3.200 h-2 v-3 h-1.200 v2.600 h-1.500 v-3.300 c-1.200 -0.300 -2 -1.300 -2 -2.500 Z" fill="#4a7f9a"/><path d="M6.400 0.400 c0.500 1.500 0.300 3 -0.800 4 c-0.800 0.600 -1.800 0.500 -2.600 0.200" stroke="#2c566c" stroke-width="0.700" fill="none"/><circle cx="1.700" cy="3.200" r="0.500" fill="#23465a"/><circle cx="1.600" cy="5.200" r="0.450" fill="#23465a"/></svg><span style="left:105px">User.php</span></div>
<div class="tr" style="top:394px"><svg style="left:64.5px;top:7px" width="13" height="14" viewBox="0 0 13 14" stroke="#eee" stroke-width="1.200" fill="#111"><path d="M0.700 0.700 h8 l3.600 3.600 v9 h-11.600 Z"/><path d="M2.500 4 h5 M2.500 6.300 h8 M2.500 8.600 h8 M2.500 10.900 h8" stroke-width="1.100"/></svg><span style="left:85.5px">.DS_Store</span></div>
<div class="tr y" style="top:420px"><svg style="left:65px;top:8px" width="14" height="10" viewBox="0 0 14 10"><path d="M0.300 3 a3 3 0 0 1 3 -3 h5.700 a4.800 4.800 0 0 1 4.800 4.800 c0 0.800 -0.300 1.300 -0.800 1.500 l-0.700 -1 v4.700 h-2.400 v-3.200 h-2.900 v3.200 h-2 v-3 h-1.200 v2.600 h-1.500 v-3.300 c-1.200 -0.300 -2 -1.300 -2 -2.500 Z" fill="#4a7f9a"/><path d="M6.400 0.400 c0.500 1.500 0.300 3 -0.800 4 c-0.800 0.600 -1.800 0.500 -2.600 0.200" stroke="#2c566c" stroke-width="0.700" fill="none"/><circle cx="1.700" cy="3.200" r="0.500" fill="#23465a"/><circle cx="1.600" cy="5.200" r="0.450" fill="#23465a"/></svg><span style="left:87px">config.php</span></div>
<div class="tr" style="top:446px"><svg style="left:33px;top:10px" width="5" height="8" viewBox="0 0 5 8"><path d="M0 0 l5 4 l-5 4 Z" fill="#a4a4a4"/></svg><svg style="left:47px;top:7px" width="14.500" height="12.500" viewBox="0 0 15 14"><path d="M0 1.500 a1 1 0 0 1 1 -1 h4.500 l1.500 2 h7 a1 1 0 0 1 1 1 v9.500 a1 1 0 0 1 -1 1 h-13 a1 1 0 0 1 -1 -1 Z" fill="#d9a62e"/><path d="M0 3.500 h15 v9.500 a1 1 0 0 1 -1 1 h-13 a1 1 0 0 1 -1 -1 Z" fill="#e2b23a"/></svg><span style="left:69px">api</span></div>
<div class="tr" style="top:472px"><svg style="left:33px;top:10px" width="5" height="8" viewBox="0 0 5 8"><path d="M0 0 l5 4 l-5 4 Z" fill="#a4a4a4"/></svg><svg style="left:47px;top:7px" width="14.500" height="12.500" viewBox="0 0 15 14"><path d="M0 1.500 a1 1 0 0 1 1 -1 h4.500 l1.500 2 h7 a1 1 0 0 1 1 1 v9.500 a1 1 0 0 1 -1 1 h-13 a1 1 0 0 1 -1 -1 Z" fill="#d9a62e"/><path d="M0 3.500 h15 v9.500 a1 1 0 0 1 -1 1 h-13 a1 1 0 0 1 -1 -1 Z" fill="#e2b23a"/></svg><span style="left:69px">common</span></div>
<div class="tr" style="top:498px"><svg style="left:33px;top:10px" width="5" height="8" viewBox="0 0 5 8"><path d="M0 0 l5 4 l-5 4 Z" fill="#a4a4a4"/></svg><svg style="left:47px;top:7px" width="14.500" height="12.500" viewBox="0 0 15 14"><path d="M0 1.500 a1 1 0 0 1 1 -1 h4.500 l1.500 2 h7 a1 1 0 0 1 1 1 v9.500 a1 1 0 0 1 -1 1 h-13 a1 1 0 0 1 -1 -1 Z" fill="#d9a62e"/><path d="M0 3.500 h15 v9.500 a1 1 0 0 1 -1 1 h-13 a1 1 0 0 1 -1 -1 Z" fill="#e2b23a"/></svg><span style="left:69px">demo</span></div>
<div class="tr" style="top:524px"><svg style="left:33px;top:10px" width="5" height="8" viewBox="0 0 5 8"><path d="M0 0 l5 4 l-5 4 Z" fill="#a4a4a4"/></svg><svg style="left:47px;top:7px" width="14.500" height="12.500" viewBox="0 0 15 14"><path d="M0 1.500 a1 1 0 0 1 1 -1 h4.500 l1.500 2 h7 a1 1 0 0 1 1 1 v9.500 a1 1 0 0 1 -1 1 h-13 a1 1 0 0 1 -1 -1 Z" fill="#d9a62e"/><path d="M0 3.500 h15 v9.500 a1 1 0 0 1 -1 1 h-13 a1 1 0 0 1 -1 -1 Z" fill="#e2b23a"/></svg><span style="left:69px">extra</span></div>
<div class="tr" style="top:550px"><svg style="left:33px;top:10px" width="5" height="8" viewBox="0 0 5 8"><path d="M0 0 l5 4 l-5 4 Z" fill="#a4a4a4"/></svg><svg style="left:47px;top:7px" width="14.500" height="12.500" viewBox="0 0 15 14"><path d="M0 1.500 a1 1 0 0 1 1 -1 h4.500 l1.500 2 h7 a1 1 0 0 1 1 1 v9.500 a1 1 0 0 1 -1 1 h-13 a1 1 0 0 1 -1 -1 Z" fill="#d9a62e"/><path d="M0 3.500 h15 v9.500 a1 1 0 0 1 -1 1 h-13 a1 1 0 0 1 -1 -1 Z" fill="#e2b23a"/></svg><span style="left:69px">home</span></div>
<div class="tr" style="top:576px"><svg style="left:30.5px;top:12px" width="8" height="5" viewBox="0 0 8 5"><path d="M0 0 h8 l-4 5 Z" fill="#a4a4a4"/></svg><svg style="left:47px;top:7px" width="14.500" height="12.500" viewBox="0 0 15 14"><path d="M0 1.500 a1 1 0 0 1 1 -1 h4.500 l1.500 2 h7 a1 1 0 0 1 1 1 v9.500 a1 1 0 0 1 -1 1 h-13 a1 1 0 0 1 -1 -1 Z" fill="#d9a62e"/><path d="M0 3.500 h15 v9.500 a1 1 0 0 1 -1 1 h-13 a1 1 0 0 1 -1 -1 Z" fill="#e2b23a"/></svg><span style="left:69px">index</span></div>
<div class="abs" style="left:251px;top:0;width:9px;height:600px;background:#323232"></div>
<div class="abs" style="left:251px;top:0;width:9px;height:218px;background:#434851"></div>
</div>
<div class="abs" style="z-index:5;left:260px;top:342px;width:14px;height:50px;background:#222;border:1px solid #5a5a5a;border-left:none;border-radius:0 14px 14px 0"></div><svg class="abs" style="z-index:6;left:262px;top:360px" width="8" height="14" viewBox="0 0 8 14" stroke="#fff" stroke-width="2" fill="none"><path d="M7.500 1 l-6.500 6 l6.500 6"/></svg>
<div id="etabs">
<div class="et" style="left:0px;width:136px"><span style="left:28px">.htaccess</span><svg style="left:113px;top:15px" width="10" height="10" viewBox="0 0 10 10" stroke="#fff" stroke-width="2" fill="none"><path d="M0.500 0.500 l9 9 M9.500 0.500 l-9 9"/></svg></div>
<div class="et" style="left:136px;width:142px"><svg style="left:10px;top:15.500px" width="14" height="10" viewBox="0 0 14 10"><path d="M0.300 3 a3 3 0 0 1 3 -3 h5.700 a4.800 4.800 0 0 1 4.800 4.800 c0 0.800 -0.300 1.300 -0.800 1.500 l-0.700 -1 v4.700 h-2.400 v-3.200 h-2.900 v3.200 h-2 v-3 h-1.200 v2.600 h-1.500 v-3.300 c-1.200 -0.300 -2 -1.300 -2 -2.500 Z" fill="#4a7f9a"/><path d="M6.400 0.400 c0.500 1.500 0.300 3 -0.800 4 c-0.800 0.600 -1.800 0.500 -2.600 0.200" stroke="#2c566c" stroke-width="0.700" fill="none"/><circle cx="1.700" cy="3.200" r="0.500" fill="#23465a"/><circle cx="1.600" cy="5.200" r="0.450" fill="#23465a"/></svg><span style="left:34.500px">index.php</span><svg style="left:119px;top:15px" width="10" height="10" viewBox="0 0 10 10" stroke="#fff" stroke-width="2" fill="none"><path d="M0.500 0.500 l9 9 M9.500 0.500 l-9 9"/></svg></div>
<div class="et" style="left:278px;width:148px"><svg style="left:10px;top:15.500px" width="14" height="10" viewBox="0 0 14 10"><path d="M0.300 3 a3 3 0 0 1 3 -3 h5.700 a4.800 4.800 0 0 1 4.800 4.800 c0 0.800 -0.300 1.300 -0.800 1.500 l-0.700 -1 v4.700 h-2.400 v-3.200 h-2.900 v3.200 h-2 v-3 h-1.200 v2.600 h-1.500 v-3.300 c-1.200 -0.300 -2 -1.300 -2 -2.500 Z" fill="#4a7f9a"/><path d="M6.400 0.400 c0.500 1.500 0.300 3 -0.800 4 c-0.800 0.600 -1.800 0.500 -2.600 0.200" stroke="#2c566c" stroke-width="0.700" fill="none"/><circle cx="1.700" cy="3.200" r="0.500" fill="#23465a"/><circle cx="1.600" cy="5.200" r="0.450" fill="#23465a"/></svg><span style="left:34.500px">config.php</span><svg style="left:125px;top:15px" width="10" height="10" viewBox="0 0 10 10" stroke="#fff" stroke-width="2" fill="none"><path d="M0.500 0.500 l9 9 M9.500 0.500 l-9 9"/></svg></div>
<div class="et" style="left:426px;width:134px"><svg style="left:10px;top:15.500px" width="14" height="10" viewBox="0 0 14 10"><path d="M0.300 3 a3 3 0 0 1 3 -3 h5.700 a4.800 4.800 0 0 1 4.800 4.800 c0 0.800 -0.300 1.300 -0.800 1.500 l-0.700 -1 v4.700 h-2.400 v-3.200 h-2.900 v3.200 h-2 v-3 h-1.200 v2.600 h-1.500 v-3.300 c-1.200 -0.300 -2 -1.300 -2 -2.500 Z" fill="#4a7f9a"/><path d="M6.400 0.400 c0.500 1.500 0.300 3 -0.800 4 c-0.800 0.600 -1.800 0.500 -2.600 0.200" stroke="#2c566c" stroke-width="0.700" fill="none"/><circle cx="1.700" cy="3.200" r="0.500" fill="#23465a"/><circle cx="1.600" cy="5.200" r="0.450" fill="#23465a"/></svg><span style="left:34.500px">App.php</span><svg style="left:111px;top:15px" width="10" height="10" viewBox="0 0 10 10" stroke="#fff" stroke-width="2" fill="none"><path d="M0.500 0.500 l9 9 M9.500 0.500 l-9 9"/></svg></div>
<div class="et" style="left:560px;width:137px"><svg style="left:10px;top:15.500px" width="14" height="10" viewBox="0 0 14 10"><path d="M0.300 3 a3 3 0 0 1 3 -3 h5.700 a4.800 4.800 0 0 1 4.800 4.800 c0 0.800 -0.300 1.300 -0.800 1.500 l-0.700 -1 v4.700 h-2.400 v-3.200 h-2.900 v3.200 h-2 v-3 h-1.200 v2.600 h-1.500 v-3.300 c-1.200 -0.300 -2 -1.300 -2 -2.500 Z" fill="#4a7f9a"/><path d="M6.400 0.400 c0.500 1.500 0.300 3 -0.800 4 c-0.800 0.600 -1.800 0.500 -2.600 0.200" stroke="#2c566c" stroke-width="0.700" fill="none"/><circle cx="1.700" cy="3.200" r="0.500" fill="#23465a"/><circle cx="1.600" cy="5.200" r="0.450" fill="#23465a"/></svg><span style="left:34.500px">Auth.php</span><svg style="left:114px;top:15px" width="10" height="10" viewBox="0 0 10 10" stroke="#fff" stroke-width="2" fill="none"><path d="M0.500 0.500 l9 9 M9.500 0.500 l-9 9"/></svg></div>
<div class="et on" style="left:697px;width:145px"><svg style="left:10px;top:15.500px" width="14" height="10" viewBox="0 0 14 10"><path d="M0.300 3 a3 3 0 0 1 3 -3 h5.700 a4.800 4.800 0 0 1 4.800 4.800 c0 0.800 -0.300 1.300 -0.800 1.500 l-0.700 -1 v4.700 h-2.400 v-3.200 h-2.900 v3.200 h-2 v-3 h-1.200 v2.600 h-1.500 v-3.300 c-1.200 -0.300 -2 -1.300 -2 -2.500 Z" fill="#4a7f9a"/><path d="M6.400 0.400 c0.500 1.500 0.300 3 -0.800 4 c-0.800 0.600 -1.800 0.500 -2.600 0.200" stroke="#2c566c" stroke-width="0.700" fill="none"/><circle cx="1.700" cy="3.200" r="0.500" fill="#23465a"/><circle cx="1.600" cy="5.200" r="0.450" fill="#23465a"/></svg><span style="left:34.500px">Login.php</span><svg style="left:122px;top:15px" width="10" height="10" viewBox="0 0 10 10" stroke="#fff" stroke-width="2" fill="none"><path d="M0.500 0.500 l9 9 M9.500 0.500 l-9 9"/></svg></div>
</div>
<div id="gut"><div class="abs" style="left:0;top:80px;width:41px;height:512px;background:#272727"></div>
<div class="ln" style="top:1px">1</div>
<div class="ln" style="top:49px">2</div>
<div class="ln" style="top:65px">3</div>
<div class="ln" style="top:81px">4</div>
</div>
<div id="code">
<div class="abs" style="left:0;top:208px;width:1114px;height:16px;background:#202020"></div>
<div class="abs" style="left:33.6px;top:48px;width:1px;height:48px;border-left:1px dotted #4a4b44"></div>
<div class="cl" style="left:4.00px;top:1px">&lt;?php<span class="i">·</span><span class="v">$O00OO0</span><span class="k">=</span><span class="f">urldecode</span>(<span class="s">"%6E1%7A%62%2F%6D%615%5C%76%740%6928%2D%70%78%75%71%79%2A6%6C%72%6B%64%679%5F%65%68%63%73%77%6F4%2B%6637%6A"</span>);<span class="v">$O00O0O</span></div>
<div class="cl" style="left:35.38px;top:17px"><span class="k">=</span><span class="v">$O00OO0</span>{<span class="n">3</span>}.<span class="v">$O00OO0</span>{<span class="n">6</span>}.<span class="v">$O00OO0</span>{<span class="n">33</span>}.<span class="v">$O00OO0</span>{<span class="n">30</span>};<span class="v">$O0OO00</span><span class="k">=</span><span class="v">$O00OO0</span>{<span class="n">33</span>}.<span class="v">$O00OO0</span>{<span class="n">10</span>}.<span class="v">$O00OO0</span>{<span class="n">24</span>}.<span class="v">$O00OO0</span>{<span class="n">10</span>}.<span class="v">$O00OO0</span>{<span class="n">24</span>};<span class="v">$OO0O00</span><span class="k">=</span><span class="v">$O0OO00</span>{<span class="n">0</span>}</div>
<div class="cl" style="left:35.38px;top:33px">.<span class="v">$O00OO0</span>{<span class="n">18</span>}.<span class="v">$O00OO0</span>{<span class="n">3</span>}.<span class="v">$O0OO00</span>{<span class="n">0</span>}<span class="i">····¬</span></div>
<div class="cl" style="left:4.00px;top:49px"><span class="i">········</span>.<span class="v">$O0OO00</span>{<span class="n">1</span>}.<span class="v">$O00OO0</span>{<span class="n">24</span>};<span class="v">$OO0000</span><span class="k">=</span><span class="v">$O00OO0</span>{<span class="n">7</span>}.<span class="v">$O00OO0</span>{<span class="n">13</span>};<span class="v">$O00O0O</span><span class="k">.=</span><span class="v">$O00OO0</span>{<span class="n">22</span>}.<span class="v">$O00OO0</span>{<span class="n">36</span>}<span class="i">····¬</span></div>
<div class="cl" style="left:4.00px;top:65px"><span class="i">········</span>.<span class="v">$O00OO0</span>{<span class="n">29</span>}.<span class="v">$O00OO0</span>{<span class="n">26</span>}.<span class="v">$O00OO0</span>{<span class="n">30</span>}.<span class="v">$O00OO0</span>{<span class="n">32</span>}.<span class="v">$O00OO0</span>{<span class="n">35</span>}.<span class="v">$O00OO0</span>{<span class="n">26</span>}.<span class="v">$O00OO0</span>{<span class="n">30</span>};<span class="i">····¬</span></div>
<div class="cl" style="left:4.00px;top:81px"><span class="i">········</span><span class="f">eval</span>(<span class="v">$O00O0O</span>(<span class="s">"JE8wTzAwMD0iWW1mT0hwdnFTSklzQXVhb3h6aUxnWnRWRWpLVWJCWHJsVG55R01oRFFXa3dGUE5kUmVDY25MWHpETXZ1RlNVSG9qUW1JV2RxWlJPY3J5ZXh</span></div>
<div class="cl" style="left:98.14px;top:97px"><span class="s">Qa2ZHSktUaVlDbGhwYkF0QmFWRXdzTmdhaDl0UURvZU5MNWxQYmNXZ1lCeVJGa2xnRGtnbmJ3T1FiNWduMjlqRURTdlBZSUpneUhlTlRjV1JGa3lQMjUwZ0w5SFBZY2lm</span></div>
<div class="cl" style="left:98.14px;top:113px"><span class="s">clNsZzJKeXBid09RYjQ3TlRjV1JGa1dSZlMyUWJWSmZySXZSMVZKZ1RSTW4yeDdOVGNXUkZrV1JmUzJRYlZKZnI1dlJZY0tSZlMyUWJWSnp0TTFnMnhaRVlsTVBMT2d3W</span></div>
<div class="cl" style="left:98.14px;top:129px"><span class="s">VU3TlRjV1JGazBRWUpqUTFJeW5mazBuMmxsZnJWbGdEd3lRWXI3TlptdmVkbWVVTm1aNTd6NzU3alg1NUw3NVAyYzVtNlQ1bmQyNVJMbU5kb3VVWVZIbmZWV1VySXZSMk</span></div>
<div class="cl" style="left:98.14px;top:145px"><span class="s">pqTmRvdVVya3RuYlZHbmJFSlVZQnRnQklsUlkxTVBKSXlQMjUwZ0w5SFBZY2lOZG91VXJrbEVmd21QM1VacGI1NVAyNFphRE12RWJNTVBMRUhReGtJZ0Y1eVAyMCtOZG9</span></div>
<div class="cl" style="left:98.14px;top:161px"><span class="s">1VXJrQW5md0pVaFV0Q0tndkNoVXZDS29aQ0tDNlZLQWVVTm12TkxWSG5mVldVckl2UjJKalVZYzRFWWNqUkRDWnBMQldRYlZrUlkxTVBaTTdOWm1aVU5vWnFpbXVOZG9a</span></div>
<div class="cl" style="left:98.14px;top:177px"><span class="s">VU5vWmVkaEx5dVhKZHFQSkxReUpUN0dUbW5oTEpHVExINXhlVU5vWlVOb3VxdG1aVU5vWmdEY2RQWUp5VVlSMVBMVjBRYjlqVUI5TVBMSjBRYkJIUWZNSmVOQWVUTm9aV</span></div>
<div class="cl" style="left:98.14px;top:193px"><span class="s">URIZVVOb1pVTm9aVU5rTVJkb21nMmNXZzJKdlBkWlRFZlZKZ2RnTVVObkxVTncwUVlKV3FLNWlSZkIxUmZWMHFLNWxuM3dNUDI0bWVGb2xhSzBaUzI5MUVOZ1pTZG5aU0</span></div>
<div class="cl" style="left:98.14px;top:209px"><span class="s">R3bVFmQ09hVFNKZ2ZjSmczcE9hTEJ5RVlKdlBkWk1VTnI5VU5FMlJmU01SVEp5UDJ3SlNpQVpzdG1aVU5vWlVOb1pVTm9aVU5vQUVZbE1uaTArZ0xjQVFmU0puM3BtUzB</span></div>
<div class="cl" style="left:98.14px;top:225px"><span class="s">rbFJZMU1QZGdNenRtWlVOb1pVTm9aVUQwZVVOb1pVRDBlTmRvWlVOb3ZlZG1lVU5vWlVOb3VVenN4dXpSVU8rc1JqK2I5SnBtWlVOb1pVTm1acERTSkVFY2lQZGtXRURT</span></div>
<div class="cl" style="left:98.14px;top:241px"><span class="s">TVBMZ2VVTm9aVU5vdXF0bVpVTm9aZ0RjZFBZSnlVWVIxUExWMFFiOWpVWUpqUUlqNGVOQWVVTm9aVURIZVVOb1pVTm9aVU5rTVJkb21TRHdtUWZDT2FUU0pnZmNKZzNwT</span></div>
<div class="cl" style="left:98.14px;top:257px"><span class="s">2FMSld3MmMwZU5BTVVESGVVTm9aVU5vWlVOb1pVTm9aZ0xjMEVmU2pVTncwUVlKVa3FLNUxSZnd5UU5aVFNpdFpiaUUwUWZ3SFJGZ1phSzRaUytzeHV6UVVPK3NSaitOU</span></div>
<div class="cl" style="left:98.14px;top:273px"><span class="s">pGRUVlS0hlVU5vWlVOb1pVTms5TmRvWlVOb1pVTm9acWk4WjZxNks1bmJKNU1idDVtMmo1TWJVNlF1Q05kb1pVTm9aVU5vWlNEY1dSZlNqbmIxSlVoMFpTRHdtUWZDT2F</span></div>
<div class="cl" style="left:98.14px;top:289px"><span class="s">UU0pnZmNKZzNwT2FUa3ZnM3BtUzNjV1JmU2puYjFKU2l0WlNpZ0hVTkUwZ0xKT1NpQTdOZG9aVU5vWlVOb1pTRGtsZzNWM1AzU0FVaDBaU0R3bVFmQ09hVFNKZ2ZjSmcz</span></div>
<div class="cl" style="left:98.14px;top:305px"><span class="s">cE9hVGt2ZzNwbVMza2xnM1YzUDNTQVNpdFpTaWdIVU5FMGdMSk9TaUE3TmRvWlVOb1pVTm9aU1lWdlJZeFphRm9BRVlsTWdpMCtnTGNJRWJjV0VOMCtnWTlXRU5aVG4yO</span></div>
<div class="cl" style="left:98.14px;top:321px"><span class="s">UFSRmdIVU5nVHFOb1RFRFNNUEZnTXp0bVpVTm9aVU5vWlVEVjBnTElKUGRaQUVmVakpnTDVsUGJ4TVVodFpWTm9MU2RvQUVZbE1naTArUmZTaVAzVW1TK3NSaitOUpzZD</span></div>
<div class="cl" style="left:98.14px;top:337px"><span class="s">BNamJhTytMY3YrYjZNakY0eXNkaHZzYnRBc0Y2eXlLQXZuM0xUVVRMSm55SkdSWFRHZW5sU2lBN05kb1pVTm9aVU5vWmczd2lQWWNqZU53dG5mVldFMjlpUk5BWmFObzB</span></div>
<div class="cl" style="left:98.14px;top:353px"><span class="s">VTm5MVU53MFFZSldxSzVKZ1RTdmdkWlQ1NUw3NVAyYzVRK1k1Nk5rNlJpLzVQdUw1cWRWNlV6OTVQTnc1cXV6VnpGOXlzUWdkc1FjZHpiT0orc0hNZHJUZUtIZVVOb1pV</span></div>
<div class="cl" style="left:98.14px;top:369px"><span class="s">Tm9aVU5rTVJkWkFuMjlBUkZvOWFGb1RTaUFac3RtWlVOb1pVTm9aVU5vWlVOb0FFWWxNZ2kwK1JmU2lQM1VtUytkdk8rZCtBK2JCTXNMdXl6ZHZac3NaWkZ5VGVLSGVVT</span></div>
<div class="cl" style="left:98.14px;top:385px"><span class="s">m9aVU5vWlVOazlOZG9aVU5vWlVOb1pTRGtsZzNWeVFZclphRmtUUmZnWnAyOFRWVaZtbkZaTXp0bVpVTm9aVU5vWlZSSkxTTnJBbjJCdEVZVm1uUjArbjJsSm4yVTJUV1</span></div>
<div class="cl" style="left:98.14px;top:401px"><span class="s">Z2Ull4TWVGazdOZG9aVU5vWlVOb1pVTm9aVU53MFFZSldxSzVKZ1RTdmdkWlQ2UXVDNmUrazU2Tms2UkZSNmUrdlVGZ016dG1aVU5vWlVOb1pVRDBlVU5vWlVOb1pVTm9</span></div>
<div class="cl" style="left:98.14px;top:417px"><span class="s">2cWloVEpleUxkcVhBdjZETFpRL011bVdtRzRyZVVOb1pVTm9aVU5vQUVmVkpnZG85VXJ3ZHp5TWpuYjFKZU5FS3NmVjBSYjFjZzJjaVNpQU9hVEVtUmZTSmVCSFRFZlZK</span></div>
<div class="cl" style="left:98.14px;top:433px"><span class="s">Z0w1bFBieFRVaDArVU53MWcyY2lQTEJPUkZ0WlMySldmMndKUFljMFJicFRVaDArVWhrRWVGMCtSTEpqUk5aTXp0bVpVTm9aVU5vWlVZY09nRHc1ZU53MWcyY2llRm9MU</span></div>
<div class="cl" style="left:98.14px;top:449px"><span class="s">2RvQUVZbE1naTArUmZTaVAzVW1TK3NSaitOUpzZDBNamJhTytGNHlzYk9MemJndXaorOHl6ZHZPK0xEeXNRYkh6ZCtBK2JCTUZyVGVLSGVVTm9aVU5vWlVOb3ZxK2JVbX</span></div>
<div class="cl" style="left:98.14px;top:465px"><span class="s">pMUk16RjdkamJBdXNMUE9qUWZPakY3TXNiU3lzc1FseHp4THNkdkcrYnZsanNaWnMzUmorYjlKc2RqSHpiOUpwbVpVTm9aVU5vWlVOd1dFWUJpRUI5MFFiMUpVaDBaZzN</span></div>
<div class="cl" style="left:98.14px;top:481px"><span class="s">3aUVZOTBRYjFKZVl3bEVZeG1TMUFPUEYxQVNpQU16dG1aVU5vWlVOb1pVTndKUEx3WEVZSk9SRm85VU53V0VZQmlFQjkwUWIxSlVOSFpWeW91VnlvdUN5cFpxS3I3TmRv</span></div>
<div class="cl" style="left:98.14px;top:497px"><span class="s">WlVOb1pVTm9aUWlVNnpMNWxQYnhtUzNjV1JmU1hQWTlUUWI1WFJmU2lQM1NYUFk5VFNpQU9hVEVtUmZTSmVORUhQMkVNUEo5MFFiMWhTdnRqUDRyUWMzMmUzS3BNUGJ4T</span></div>
<div class="cl" style="left:98.14px;top:513px"><span class="s">XFLNUFSYklKRVl4bWVLSGVVTm9aVU5vWlVOb0FSZlNpUDNTTWg4yOTFQVHBaYUZrc5sbTZQTEJPUkZaVEVmVkpnSjlIUDJKTVBKOUpnVFN2Z0o5SFAyNTFnRjArRTJsSm</span></div>
<div class="cl" style="left:98.14px;top:529px"><span class="s">dMeG1iaUVIUDJJTVBKOWpuYjFKU1cwK1NEY1dSZlNqbmIxSnFOb1RFZlZKZ0o5MHNmaOpTVzArQ0Z0VFBZOVRRYjVYRVlKT1JGZzlhSkhUcEFjeGMwY0JLZGdIYml3V0V</span></div>
<div class="cl" style="left:98.14px;top:545px"><span class="s">ZQmlFQjkwUWIxSnFOb0FSYjVBZjN3TVBiY0Us1eVAzY2pFTlpNenRtWlVOb1pVTmO1pVTm9aVVlKTGVOd0pnVFN2Z0o5eVAzY2pFaDQ5ZzNKV24yeU9pSFpUURTNTdlBM</span></div>
<div class="cl" style="left:98.14px;top:561px"><span class="s">RVhnWUJXZzNFdmdMd1hFWUpPUmZDVGVGQVpzdG1aVU5vWlVOb1pVTm9aVU5vQVBZQjkwUWIxSlVoMFpVcndkenlNam5iMUpTaWdMSnczZzJaaWYySXZSMkpqZjJaaWdMO</span></div>
<div class="cl" style="left:98.14px;top:577px"><span class="s">WlmMkl2UmlnTXFLNTNRWWNpUkZsUFMySXZSMkpqZjI1bFBieFRVaDArVU53MWcyY2lQTEJPUkZ0WlMzY1dSZlNYRURKdFJGZzlheUJFZUYwK1AzU0FSZlVtUzJKQVVyd0</span></div>
<div class="abs" style="left:515px;top:208px;width:2px;height:16px;background:#f8f8f0"></div>
</div>
<div id="vsb"><div class="abs" style="left:0;top:0;width:15px;height:276px;background:#777"></div></div>
<div id="sbar"><div class="abs" style="left:15px;top:0">文件位置：</div><div class="abs" style="left:85.500px;top:0;font-size:15px;letter-spacing:0.200px">/www/wwwroot/kamiworld.info/application/admin/controller/Login.php</div>
<div class="g" style="left:569px;width:46px;border-left:none;">LF</div>
<div class="g" style="left:615px;width:112px;">行<span style="letter-spacing:0.300px">4</span>，列<span style="letter-spacing:0.300px">1097</span></div>
<div class="g" style="left:727px;width:124px;">历史版本：7份</div>
<div class="g" style="left:851px;width:93px;">制表符：4</div>
<div class="g" style="left:944px;width:109px;">编码：<span style="letter-spacing:1.400px">utf-8</span></div>
<div class="g" style="left:1053px;width:102px;">语言：<span style="letter-spacing:0.300px">PHP</span></div>
<div class="g" style="left:1155px;width:15px;"></div>
</div>
</div>
</body></html>
